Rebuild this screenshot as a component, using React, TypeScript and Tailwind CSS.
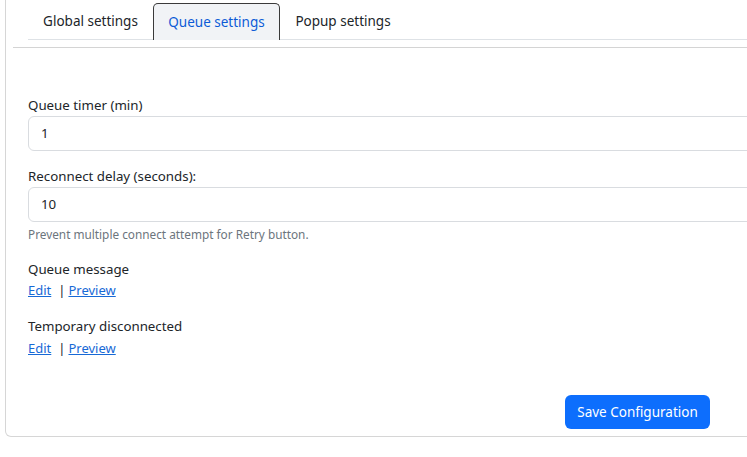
import React from "react";

export default function App() {
  const font = { fontFamily: '"Noto Sans", "Open Sans", sans-serif' };
  return (
    <div className="w-[747px] h-[457px] overflow-hidden bg-white text-[#212529]" style={font}>
      <div className="ml-[5px] w-[820px] h-[437px] border-l border-b border-r border-[#d6d6d6] rounded-bl-[6px] pl-[22px]">
        <div className="pt-[3px] flex border-b border-[#dee2e6] h-[40px] text-[13.5px]">
          <div className="w-[125px] h-[36px] flex items-center justify-center text-[#212529]">Global settings</div>
          <div className="w-[127px] h-[37px] flex items-center justify-center text-[#0d5bd6] bg-[#f1f3f6] border border-[#3a3a3a] border-b-0 rounded-t-[5px]">Queue settings</div>
          <div className="w-[126px] h-[36px] flex items-center justify-center text-[#212529]">Popup settings</div>
        </div>
        <div className="ml-[-15px] mt-[7px] border-t border-[#d4d4d4]"></div>
        <div className="pt-[48px] text-[13.3px]">
          <div className="h-[18px] leading-[18px]">Queue timer (min)</div>
          <div className="mt-[2px] h-[35px] border border-[#d9dce0] rounded-l-[6px] flex items-center pl-[12px]">1</div>
          <div className="mt-[16px] h-[18px] leading-[18px]">Reconnect delay (seconds):</div>
          <div className="mt-[2px] h-[35px] border border-[#d9dce0] rounded-l-[6px] flex items-center pl-[12px]">10</div>
          <div className="mt-[4px] h-[16px] leading-[16px] text-[11.8px] text-[#6c757d]">Prevent multiple connect attempt for Retry button.</div>
          <div className="mt-[18px] h-[18px] leading-[18px]">Queue message</div>
          <div className="mt-[3px] h-[18px] leading-[18px] flex text-[13px]">
            <a className="text-[#1769d6] underline">Edit</a>
            <span className="ml-[7px] mr-[3px]">|</span>
            <a className="text-[#1769d6] underline">Preview</a>
          </div>
          <div className="mt-[18px] h-[18px] leading-[18px]">Temporary disconnected</div>
          <div className="mt-[4px] h-[18px] leading-[18px] flex text-[13px]">
            <a className="text-[#1769d6] underline">Edit</a>
            <span className="ml-[7px] mr-[3px]">|</span>
            <a className="text-[#1769d6] underline">Preview</a>
          </div>
          <div className="mt-[38px] pl-[537px]">
            <button className="w-[145px] h-[34px] bg-[#0d6efd] text-white rounded-[6px] text-[13.5px]">Save Configuration</button>
          </div>
        </div>
      </div>
    </div>
  );
}
